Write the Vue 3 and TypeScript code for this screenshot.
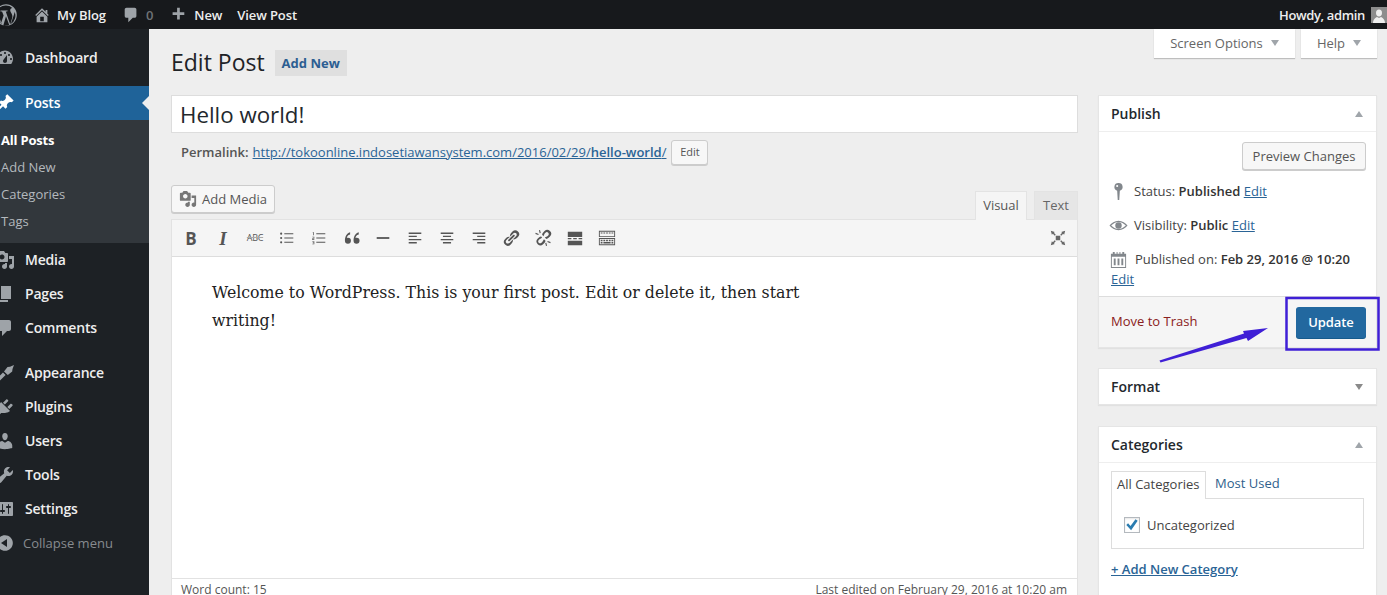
<script setup lang="ts">
const P: Record<string, string> = {
  dashboard: 'M3.76 16h12.48c1.1-1.43 1.76-3.21 1.76-5.14 0-4.64-3.58-8.4-8-8.4s-8 3.76-8 8.4c0 1.93.66 3.71 1.76 5.14zM10 4c.55 0 1 .45 1 1s-.45 1-1 1-1-.45-1-1 .45-1 1-1zM6 6c.55 0 1 .45 1 1s-.45 1-1 1-1-.45-1-1 .45-1 1-1zm8 0c.55 0 1 .45 1 1s-.45 1-1 1-1-.45-1-1 .45-1 1-1zm-5.37 5.55L12 7v6c0 1.1-.9 2-2 2s-2-.9-2-2c0-.57.24-1.08.63-1.45zM4 10c.55 0 1 .45 1 1s-.45 1-1 1-1-.45-1-1 .45-1 1-1zm12 0c.55 0 1 .45 1 1s-.45 1-1 1-1-.45-1-1 .45-1 1-1z',
  pin: 'M10.44 3.02l1.82-1.82 6.36 6.35-1.83 1.82c-1.05-.68-2.48-.57-3.41.36l-.75.75c-.92.93-1.04 2.35-.35 3.41l-1.83 1.82-2.41-2.41-2.8 2.79c-.42.42-3.38 2.71-3.8 2.29s1.86-3.39 2.28-3.81l2.79-2.79L4.1 9.36l1.83-1.82c1.05.69 2.48.57 3.4-.36l.75-.75c.93-.92 1.05-2.35.36-3.41z',
  media: 'M13 11V4c0-.55-.45-1-1-1h-1.67L9 1H5L3.67 3H2c-.55 0-1 .45-1 1v7c0 .55.45 1 1 1h10c.55 0 1-.45 1-1zM7 4.5c1.38 0 2.5 1.12 2.5 2.5S8.38 9.5 7 9.5 4.5 8.38 4.5 7 5.62 4.5 7 4.5zM14 6h5v10.5c0 1.38-1.12 2.5-2.5 2.5S14 17.88 14 16.5s1.12-2.5 2.5-2.5c.17 0 .34.02.5.05V9h-3V6zm-4 8.05V13h2v3.5c0 1.38-1.12 2.5-2.5 2.5S7 17.88 7 16.5 8.12 14 9.5 14c.17 0 .34.02.5.05z',
  pages: 'M6 15V2h10v13H6zm-1 1h8v2H3V5h2v11z',
  comment: 'M5 2h9c1.1 0 2 .9 2 2v7c0 1.1-.9 2-2 2h-2l-5 5v-5H5c-1.1 0-2-.9-2-2V4c0-1.100.9-2 2-2z',
  brush: 'M2 15.4l6-6 2.6 2.6-6 6a1.84 1.84 0 0 1-2.6-2.6zM9 8.400l3.500-4.400 2.500-.3L19 2l-1.500 4-.3 2.500-4.400 3.500z',
  plugin: 'M13.11 4.36L9.87 7.6 8 5.73l3.24-3.24c.35-.34 1.05-.2 1.56.32.52.51.66 1.21.31 1.55zm-8 1.77l.91-1.12 9.01 9.01-1.19.84c-.71.71-2.63 1.16-3.82 1.16H6.14L4.9 17.26c-.59.59-1.54.59-2.12 0-.59-.58-.59-1.53 0-2.12l1.24-1.24v-3.88c0-1.13.4-3.19 1.09-3.89zm7.26 3.97l3.24-3.24c.34-.35 1.04-.21 1.55.31.52.51.66 1.21.31 1.55l-3.24 3.25z',
  users: 'M10 9.25c-2.27 0-2.73-3.44-2.73-3.44C7 4.02 7.82 2 9.97 2c2.16 0 2.98 2.02 2.71 3.81 0 0-.41 3.44-2.68 3.44zm0 2.57L12.72 10c2.39 0 4.52 2.33 4.52 4.53v2.49s-3.65 1.13-7.24 1.13c-3.65 0-7.24-1.13-7.24-1.13v-2.49c0-2.25 1.94-4.48 4.47-4.48z',
  tools: 'M16.68 9.77c-1.34 1.34-3.3 1.67-4.95.99l-5.41 6.52c-.99.99-2.59.99-3.58 0s-.99-2.59 0-3.57l6.52-5.42c-.68-1.65-.35-3.61.99-4.95 1.28-1.28 3.12-1.62 4.72-1.06l-2.89 2.89 2.82 2.82 2.86-2.87c.53 1.58.18 3.39-1.08 4.65z',
  settings: 'M18 16V4c0-.55-.45-1-1-1H3c-.55 0-1 .45-1 1v12c0 .55.45 1 1 1h14c.55 0 1-.45 1-1zM8 11h1c.55 0 1 .45 1 1s-.45 1-1 1H8v1.5c0 .28-.22.5-.5.5s-.5-.22-.5-.5V13H6c-.55 0-1-.45-1-1s.45-1 1-1h1V5.500c0-.28.22-.5.5-.5s.5.22.5.5V11zm5-2h-1c-.55 0-1-.45-1-1s.45-1 1-1h1V5.500c0-.28.22-.5.5-.5s.5.22.5.5V7h1c.55 0 1 .45 1 1s-.45 1-1 1h-1v5.500c0 .28-.22.5-.5.5s-.5-.22-.5-.5V9z',
  collapse: 'M10 2.16c4.33 0 7.84 3.51 7.84 7.84s-3.51 7.84-7.84 7.84S2.16 14.33 2.16 10 5.67 2.16 10 2.16zm2 11.84V6l-6 4z',
  home: 'M16 8.5l1.53 1.53-1.06 1.06L10 4.62l-6.47 6.47-1.06-1.06L10 2.5l4 4v-2h2v4zm-6-2.46l6 5.99V18H4v-5.97zM12 17v-5H8v5h4z',
  plus: 'M17 7v3h-5v5H9v-5H4V7h5V2h3v5h5z',
  wp: 'M10 1a9 9 0 1 0 0 18 9 9 0 0 0 0-18zm0 1.100a7.900 7.900 0 0 1 5.300 2c-1.100 0-1.800 1-1.800 1.900 0 .9.500 1.600 1 2.500.4.700.800 1.600.800 2.800 0 .9-.300 1.900-.8 3.300l-1 3.400-3.700-10.900c.6 0 1.200-.1 1.200-.1.500-.1.500-.9 0-.8 0 0-1.700.1-2.700.1-1 0-2.600-.1-2.600-.1-.6 0-.6.800-.1.800 0 0 .5.100 1.100.1L8 10.400l-2.300 6.900L2.400 7A7.900 7.900 0 0 1 10 2.100zM2.100 10c0-1 .2-2 .6-2.800l3.600 10a7.900 7.900 0 0 1-4.200-7.200zm7.900 1l2.700 7.400a7.900 7.900 0 0 1-4.900.1zm6.800-4.200A7.900 7.900 0 0 1 14 17.500l2.400-7c.4-1.100.6-2 .6-2.700 0-.4 0-.7-.2-1z',
  pinS: 'M10 1a4.200 4.200 0 0 0-1.400 8.200L9.200 19h1.600l.6-9.800A4.200 4.200 0 0 0 10 1zM8.600 3.100a1.100 1.100 0 1 1 0 2.200 1.100 1.100 0 0 1 0-2.200z',
  eye: 'M10 5C6 5 2.600 7.500 .5 10 2.600 12.500 6 15 10 15s7.400-2.500 9.500-5C17.400 7.500 14 5 10 5zm0 1.200c3 0 5.700 1.800 7.700 3.800-2 2-4.700 3.800-7.700 3.800S4.300 12 2.300 10c2-2 4.700-3.800 7.700-3.800zM10 6.600a3.400 3.400 0 1 0 0 6.800 3.400 3.400 0 0 0 0-6.800z',
  cal: 'M4 2h2v2h2V2h1v2h2V2h1v2h2V2h2v2h2v15H2V4h2zm-1 5v11h14V7zm2 2h2v7H5zm4 0h2v7H9zm4 0h2v7h-2z',
  bars1: 'M3 4h14v1.500H3zM3 7.500h9V9H3zM3 11h14v1.500H3zM3 14.500h9V16H3z',
  bars2: 'M3 4h14v1.500H3zM5.500 7.500h9V9h-9zM3 11h14v1.500H3zM5.500 14.500h9V16h-9z',
  bars3: 'M3 4h14v1.500H3zM8 7.500h9V9H8zM3 11h14v1.500H3zM8 14.500h9V16H8z',
  ul: 'M3.500 4a1.200 1.200 0 1 1 0 2.400 1.200 1.200 0 0 1 0-2.400zM3.500 8.800a1.200 1.200 0 1 1 0 2.400 1.200 1.200 0 0 1 0-2.400zM3.500 13.600a1.200 1.200 0 1 1 0 2.400 1.200 1.200 0 0 1 0-2.400zM7 4.800h10v1H7zM7 9.500h10v1H7zM7 14.300h10v1H7z',
  ol: 'M7 4.800h10v1H7zM7 9.500h10v1H7zM7 14.300h10v1H7zM3 3.500h1.400v3.500h-.8V4.300H3zM2.500 8.500h2.300v2.300H3.300v.7h1.500v.6H2.500V10.200H4V9.100H2.500zM2.500 13.500h2.300V17H2.500v-.6H4v-.8H3v-.5h1v-1H2.500z',
  quote: 'M8.800 4.500v2C6.700 7 6 8.300 6 9.500c.3-.1.600-.2 1-.2a2.600 2.600 0 1 1-2.700 2.600C4.300 8.500 5.500 5.500 8.800 4.500zM16.300 4.500v2c-2.100.5-2.800 1.800-2.800 3 .3-.1.600-.2 1-.2a2.600 2.600 0 1 1-2.700 2.600c0-3.400 1.200-6.400 4.500-7.400z',
  hr: 'M3 9h14v2H3z',
  link: 'M17.740 2.760a4.320 4.320 0 0 1 0 6.100l-1.530 1.490c-1.120 1.130-2.700 1.500-4.130 1.130l2.150-2.160 1.530-1.500c.83-.84.830-2.200 0-3.030-.84-.84-2.200-.84-3.040 0l-1.520 1.500-2.160 2.160c-.37-1.430 0-3 1.130-4.130l1.490-1.530a4.320 4.320 0 0 1 6.080-.03zM8.590 13.430l5.340-5.340c.42-.42.420-1.100 0-1.520-.44-.43-1.130-.39-1.530 0l-5.330 5.340c-.42.420-.42 1.100 0 1.520.44.430 1.130.39 1.520 0zm-.25 2.010l1.520-1.500 2.160-2.140c.37 1.430 0 3-1.130 4.130l-1.490 1.530a4.320 4.320 0 0 1-6.110-6.100l1.530-1.500c1.130-1.120 2.700-1.500 4.130-1.130L6.300 10.890l-1.530 1.500c-.83.840-.83 2.200 0 3.040.84.830 2.200.830 3.030 0z',
  unlink: 'M17.740 2.260a4.320 4.320 0 0 1 0 6.100l-1.530 1.490c-.72.720-1.600 1.130-2.500 1.240L12 9.500l2.900-1.500.9-.9c.83-.84.830-2.200 0-3.030-.84-.84-2.200-.84-3.040 0l-.9.900L10.500 8 9 6.300c.1-.9.500-1.800 1.200-2.500l1.500-1.530a4.320 4.320 0 0 1 6.040-.01zM8.300 15.300c-.84.830-2.200.830-3.030 0-.84-.84-.84-2.200 0-3.040l.9-.9L9 9.800l-1-1.600c-.9.100-1.800.5-2.500 1.200l-1.530 1.500a4.320 4.320 0 0 0 6.100 6.100l1.500-1.530c.7-.7 1.100-1.600 1.200-2.500l-1.700-1.500L9.200 14.400zM1.500 5.500l.4-1.200 3.300 1.200-.4 1.200zM5.500 1.500l1.200-.3.800 3.300-1.200.3zM18.500 14.500l-.4 1.200-3.300-1.200.4-1.200zM14.500 18.500l-1.200.3-.8-3.300 1.200-.3z',
  more: 'M2 3h16v6H2zM2 10h4v1.500H2zM8 10h4v1.500H8zM14 10h4v1.500h-4zM2 13h16v5H2z',
  kitchen: 'M1 2h18v7H1zm1 1v5h16V3zm1 1h2v1H3zm3 0h2v1H6zm3 0h2v1H9zm3 0h2v1h-2zm3 0h2v1h-2zM1 10h18v8H1zm1 1v6h16v-6zm1 1h2v1.500H3zm3 0h2v1.500H6zm3 0h2v1.500H9zm3 0h2v1.500h-2zm3 0h2v1.500h-2zM3 14.500h2V16H3zm3 0h8V16H6zm9 0h2V16h-2z',
  full: 'M2 2l4.500 1.200-1.100 1.100L7.500 6.400 6.400 7.500 4.300 5.400 3.200 6.500zM18 2l-1.200 4.500-1.100-1.100-2.100 2.100-1.100-1.100 2.100-2.100-1.100-1.100zM2 18l1.200-4.500 1.100 1.100 2.100-2.100 1.100 1.100-2.100 2.100 1.100 1.100zM18 18l-4.500-1.200 1.100-1.100-2.100-2.100 1.100-1.100 2.100 2.100 1.100-1.100zM7.500 7.500h5v5h-5z'
}

interface MenuItem { label: string; icon: string; gap?: boolean }
const menuTop: MenuItem = { label: 'Dashboard', icon: 'dashboard' }
const subMenu = ['All Posts', 'Add New', 'Categories', 'Tags']
const menuRest: MenuItem[] = [
  { label: 'Media', icon: 'media' },
  { label: 'Pages', icon: 'pages' },
  { label: 'Comments', icon: 'comment' },
  { label: 'Appearance', icon: 'brush', gap: true },
  { label: 'Plugins', icon: 'plugin' },
  { label: 'Users', icon: 'users' },
  { label: 'Tools', icon: 'tools' },
  { label: 'Settings', icon: 'settings' }
]
const toolbar = ['ul', 'ol', 'quote', 'hr', 'bars1', 'bars2', 'bars3', 'link', 'unlink', 'more', 'kitchen']
</script>

<template>
  <div class="app">
    <header class="bar">
      <svg class="i bar-wp" viewBox="0 0 20 20"><path :d="P.wp" fill-rule="evenodd" /></svg>
      <svg class="i bar-home" viewBox="0 0 20 20"><path :d="P.home" /></svg>
      <span class="bar-t blog">My Blog</span>
      <svg class="i bar-com" viewBox="0 0 20 20"><path :d="P.comment" /></svg>
      <span class="bar-t zero">0</span>
      <svg class="i bar-plus" viewBox="0 0 20 20"><path :d="P.plus" /></svg>
      <span class="bar-t new">New</span>
      <span class="bar-t view">View Post</span>
      <span class="bar-t howdy">Howdy, admin</span>
      <span class="avatar">
        <svg viewBox="0 0 16 16"><path d="M8 2.500c2 0 3 1.500 3 3.500s-1.200 3.500-3 3.500S5 8 5 6s1-3.500 3-3.500zM2 16c0-3.500 2.500-5.500 4-6l2 1 2-1c1.500.5 4 2.500 4 6z" /></svg>
      </span>
    </header>

    <div class="shell">
      <nav class="side">
        <a class="mi first">
          <svg class="i mi-i" viewBox="0 0 20 20"><path :d="P[menuTop.icon]" /></svg>{{ menuTop.label }}
        </a>
        <a class="mi current">
          <svg class="i mi-i" viewBox="0 0 20 20"><path :d="P.pin" /></svg>Posts
        </a>
        <ul class="sub">
          <li v-for="(s, n) in subMenu" :key="s" :class="{ on: n === 0 }">{{ s }}</li>
        </ul>
        <a v-for="m in menuRest" :key="m.label" class="mi" :class="{ gap: m.gap }">
          <svg class="i mi-i" viewBox="0 0 20 20"><path :d="P[m.icon]" /></svg>{{ m.label }}
        </a>
        <a class="mi collapse">
          <svg class="i mi-i" viewBox="0 0 20 20"><path :d="P.collapse" /></svg>Collapse menu
        </a>
      </nav>

      <main class="main">
        <div class="head">
          <h1>Edit Post</h1>
          <a class="addnew">Add New</a>
          <div class="tab-opt wide">Screen Options<i class="down"></i></div>
          <div class="tab-opt">Help<i class="down"></i></div>
        </div>

        <div class="cols">
          <section class="left">
            <div class="title">Hello world!</div>
            <div class="perma">
              <b>Permalink:</b>
              <a class="lnk">http://tokoonline.indosetiawansystem.com/2016/02/29/<strong>hello-world</strong>/</a>
              <span class="btn small">Edit</span>
            </div>

            <div class="media-row">
              <span class="btn addmedia">
                <svg class="i am" viewBox="0 0 20 20"><path :d="P.media" /></svg>Add Media
              </span>
              <span class="etab active">Visual</span>
              <span class="etab">Text</span>
            </div>

            <div class="editor">
              <div class="tools">
                <span class="tb tb-b">B</span>
                <span class="tb tb-i">I</span>
                <span class="tb tb-s">ABC</span>
                <span v-for="t in toolbar" :key="t" class="tb" :class="`tb-${t}`">
                  <svg class="i tb-svg" viewBox="0 0 20 20"><path :d="P[t]" fill-rule="evenodd" /></svg>
                </span>
                <span class="tb tb-full">
                  <svg class="i tb-svg" viewBox="0 0 20 20"><path :d="P.full" /></svg>
                </span>
              </div>
              <div class="content">
                <p>Welcome to WordPress. This is your first post. Edit or delete it, then start writing!</p>
              </div>
              <div class="status">
                <span>Word count: 15</span>
                <span>Last edited on February 29, 2016 at 10:20 am</span>
              </div>
            </div>
          </section>

          <aside class="right">
            <div class="box publish">
              <div class="box-h">Publish<i class="up"></i></div>
              <div class="pub-body">
                <div class="prev"><span class="btn preview">Preview Changes</span></div>
                <div class="row">
                  <svg class="i ri" viewBox="0 0 20 20"><path :d="P.pinS" fill-rule="evenodd" /></svg>
                  <span>Status: <b>Published</b> <a class="lnk">Edit</a></span>
                </div>
                <div class="row">
                  <svg class="i ri" viewBox="0 0 20 20"><path :d="P.eye" fill-rule="evenodd" /></svg>
                  <span>Visibility: <b>Public</b> <a class="lnk">Edit</a></span>
                </div>
                <div class="row date">
                  <svg class="i ri" viewBox="0 0 20 20"><path :d="P.cal" fill-rule="evenodd" /></svg>
                  <span>Published on: <b>Feb 29, 2016 @ 10:20</b></span>
                  <a class="lnk dedit">Edit</a>
                </div>
              </div>
              <div class="pub-foot">
                <a class="trash">Move to Trash</a>
                <span class="update">Update</span>
              </div>
            </div>

            <div class="box format">
              <div class="box-h noline">Format<i class="down dk"></i></div>
            </div>

            <div class="box cats">
              <div class="box-h">Categories<i class="up"></i></div>
              <div class="cat-body">
                <div class="cat-tabs">
                  <span class="ctab on">All Categories</span>
                  <a class="ctab">Most Used</a>
                </div>
                <div class="cat-panel">
                  <span class="check">
                    <svg viewBox="0 0 16 16"><path d="M1.500 8l2-1.900 2.800 2.900L12 1.500 14.500 3 7 14z" /></svg>
                  </span>
                  Uncategorized
                </div>
                <a class="lnk addcat">+ Add New Category</a>
              </div>
            </div>
          </aside>
        </div>
      </main>
    </div>

    <svg class="note" viewBox="0 0 1387 595" aria-hidden="true">
      <rect x="1286.500" y="298" width="92" height="51.500" fill="none" stroke="#3f1fd6" stroke-width="2.500" />
      <path d="M1159.500 360.500L1244 333.500 1243 331 1268 328 1248 341 1246.500 338 1160.500 362.500z" fill="#3f1fd6" />
    </svg>
  </div>
</template>

<style>
html, body { margin: 0; height: 100%; overflow: hidden; background: #eeeeee; }
</style>

<style scoped>
.app { position: relative; width: 1387px; height: 595px; overflow: hidden; background: #eee; font: 13px/20px "Open Sans", sans-serif; color: #444; }
.i { display: block; fill: currentColor; flex: none; }

.bar { height: 29px; background: #17191c; color: #eee; display: flex; align-items: center; font-size: 13px; font-weight: 600; letter-spacing: -.1px; }
.bar-wp { width: 24px; height: 24px; margin-left: -6px; color: #9ea3a8; }
.bar-home { width: 18px; height: 18px; margin-left: 15px; color: #a0a5aa; }
.blog { margin-left: 6px; }
.bar-com { width: 18px; height: 18px; margin-left: 16px; color: #9ea3a8; }
.zero { margin-left: 6px; color: #6f7377; }
.bar-plus { width: 18px; height: 18px; margin-left: 16px; color: #9ea3a8; }
.new { margin-left: 7px; }
.view { margin-left: 15px; }
.howdy { margin-left: auto; letter-spacing: -.35px; }
.avatar { width: 16px; height: 16px; margin-left: 6px; background: #8d8d8d; overflow: hidden; }
.avatar svg { display: block; fill: #efefef; }

.shell { display: flex; height: 566px; }
.side { width: 149px; flex: none; background: #1d2125; padding-top: 12px; }
.mi { display: flex; align-items: center; height: 34px; color: #eee; font-size: 14px; font-weight: 600; letter-spacing: -.2px; position: relative; }
.mi-i { width: 20px; height: 20px; margin-left: -5px; margin-right: 10px; color: #9ea3a8; }
.first { margin-bottom: 11px; }
.gap { margin-top: 11px; }
.current { background: #1f6399; color: #fff; }
.current .mi-i { color: #fff; }
.current::after { content: ""; position: absolute; right: 0; top: 10px; border: 7px solid transparent; border-left: 0; border-right-color: #eee; }
.sub { list-style: none; margin: 0; padding: 7px 0 8px; background: #32373c; }
.sub li { height: 27px; line-height: 27px; padding-left: 1px; color: #b4b9be; font-size: 13px; }
.sub li.on { color: #fff; font-weight: 700; letter-spacing: -.2px; }
.collapse { color: #878b8f; font-size: 13px; font-weight: 400; letter-spacing: 0; }
.collapse .mi-i { margin-right: 8px; color: #a0a5aa; }

.main { flex: 1; min-width: 0; padding: 0 10px 0 22px; }
.head { display: flex; align-items: flex-start; height: 66px; }
h1 { margin: 18px 0 0; font-size: 23px; line-height: 31px; font-weight: 400; color: #1f2327; }
.addnew { margin: 21px 0 0 10px; width: 72px; height: 26px; line-height: 26px; text-align: center; background: #dfdfdf; color: #2c5e92; font-size: 13px; font-weight: 700; }
.tab-opt { margin-left: 6px; height: 29px; width: 76px; padding-bottom: 2px; background: #fff; box-shadow: 0 1px 1px rgba(0,0,0,.2); display: flex; align-items: center; justify-content: center; gap: 8px; color: #666; box-sizing: border-box; }
.tab-opt.wide { margin-left: auto; width: 141px; }
.down, .up { display: block; width: 0; height: 0; border: 4.500px solid transparent; border-bottom: 0; border-top: 6px solid #a0a5aa; }
.up { border-top: 0; border-bottom: 6px solid #a0a5aa; }
.dk { border-top-color: #8a8a8a; }

.cols { display: flex; gap: 20px; align-items: flex-start; }
.left { width: 907px; flex: none; }
.right { width: 279px; flex: none; }

.title { height: 38px; box-sizing: border-box; background: #fff; border: 1px solid #ddd; padding: 1px 0 0 8px; font-size: 22.300px; line-height: 36px; color: #23282d; }
.perma { margin-top: 7px; height: 25px; box-sizing: border-box; display: flex; align-items: center; padding: 0 0 1px 10px; color: #555; }
.perma b { font-weight: 600; margin-right: 4px; }
.perma strong { font-weight: 600; }
.lnk { color: #2a6496; text-decoration: underline; }
.btn { display: inline-flex; align-items: center; justify-content: center; box-sizing: border-box; background: #f7f7f7; border: 1px solid #ccc; border-radius: 3px; box-shadow: 0 1px 0 #ccc; color: #555; }
.small { width: 37px; height: 25px; margin-left: 5px; font-size: 11px; }

.media-row { margin-top: 20px; height: 35px; display: flex; align-items: flex-end; }
.addmedia { align-self: flex-start; width: 104px; height: 28px; gap: 5px; }
.am { width: 18px; height: 18px; color: #777; }
.etab { height: 29px; line-height: 26px; box-sizing: border-box; text-align: center; border: 1px solid #e3e3e3; border-bottom: 0; background: #e6e6e6; color: #666; width: 44px; margin-left: 7px; }
.etab.active { margin-left: auto; width: 52px; background: #f5f5f5; color: #555; }

.editor { background: #fff; border: 1px solid #e2e2e2; border-bottom: 0; margin-top: -1px; }
.tools { height: 37px; box-sizing: border-box; background: #f5f5f5; border-bottom: 1px solid #ddd; display: flex; align-items: center; padding: 0 0 0 3px; }
.tb { width: 32px; height: 32px; flex: none; display: flex; align-items: center; justify-content: center; color: #555; }
.tb-svg { width: 18px; height: 18px; }
.tb-quote .tb-svg { width: 23px; height: 23px; }
.tb-b { font-size: 17px; font-weight: 700; padding-top: 1px; box-sizing: border-box; }
.tb-i { font: italic 700 19px "Liberation Serif", serif; padding-top: 1px; box-sizing: border-box; }
.tb-s { font-size: 9px; letter-spacing: -.3px; text-decoration: line-through; text-decoration-color: #aaa; }
.tb-full { margin-left: auto; margin-right: 3px; color: #666; }
.content { height: 321px; box-sizing: border-box; padding: 22px 40px; }
.content p { margin: 0; width: 600px; font: 15.750px/28px "DejaVu Serif", serif; color: #222; }
.status { height: 20px; background: #fff; border-top: 1px solid #e2e2e2; display: flex; justify-content: space-between; padding: 1px 10px 0 9px; font-size: 12px; color: #555; }

.box { background: #fff; border: 1px solid #e5e5e5; box-shadow: 0 1px 1px rgba(0,0,0,.05); }
.box-h { height: 35px; display: flex; align-items: center; justify-content: space-between; padding: 0 13px 0 12px; border-bottom: 1px solid #eee; font-size: 14px; font-weight: 600; color: #23282d; }
.noline { border-bottom: 0; }
.prev { display: flex; justify-content: flex-end; padding: 10px 10px 0; }
.preview { width: 124px; height: 28px; }
.row { height: 20px; padding: 7px 10px 7px 35px; position: relative; }
.row b { font-weight: 600; color: #333; }
.ri { position: absolute; left: 10px; top: 8px; width: 19px; height: 19px; color: #82878c; }
.prev + .row { margin-top: 4px; }
.date { height: 40px; padding-left: 36px; }
.dedit { display: block; margin-left: -24px; }
.pub-foot { height: 51px; box-sizing: border-box; background: #f5f5f5; border-top: 1px solid #ddd; display: flex; align-items: center; justify-content: space-between; padding: 0 10px 0 12px; }
.trash { color: #8a2020; margin-top: -2px; }
.update { width: 70px; height: 31px; border-radius: 3px; background: #22689f; color: #fff; font-weight: 600; letter-spacing: -.1px; display: flex; align-items: center; justify-content: center; box-shadow: 0 1px 0 #155a8c; }
.format { margin-top: 20px; }
.cats { margin-top: 21px; height: 300px; }
.cat-body { padding: 8px 12px; }
.cat-tabs { display: flex; height: 27px; }
.ctab { padding: 0 9px; line-height: 25px; color: #2f5f8c; }
.ctab.on { padding: 0 5px; width: 95px; box-sizing: border-box; color: #444; background: #fff; border: 1px solid #ddd; border-bottom: 0; position: relative; z-index: 1; height: 28px; }
.cat-panel { height: 51px; box-sizing: border-box; width: 253px; border: 1px solid #ddd; display: flex; align-items: center; gap: 7px; padding: 2px 0 0 12px; }
.check { width: 16px; height: 16px; box-sizing: border-box; border: 1px solid #b4b9be; background: #fff; box-shadow: inset 0 1px 2px rgba(0,0,0,.1); }
.check svg { display: block; width: 14px; height: 14px; fill: #2a7cb0; }
.addcat { display: block; margin-top: 10px; font-weight: 600; }

.note { position: absolute; left: 0; top: 0; width: 1387px; height: 595px; pointer-events: none; }
</style>
